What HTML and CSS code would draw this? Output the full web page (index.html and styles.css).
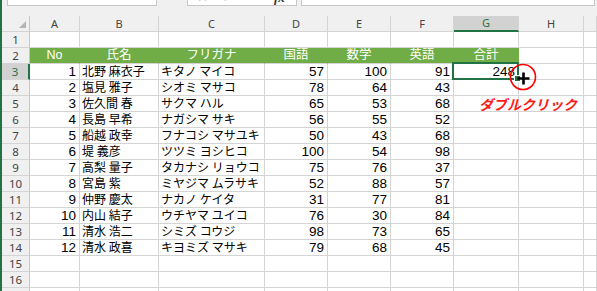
FILE: index.html
```html
<!DOCTYPE html>
<html lang="ja">
<head>
<meta charset="utf-8">
<link rel="stylesheet" href="styles.css">
</head>
<body>
<div class="app">
  <div class="topbar">
    <div class="namebox"></div>
    <div class="fxbtns"><span class="gx">✕</span><span class="gx">✓</span><span class="fx">fx</span></div>
    <div class="formula"></div>
  </div>
  <div class="sheet">
    <div class="row hdr">
      <div class="corner"></div><div>A</div><div>B</div><div>C</div><div>D</div><div>E</div><div>F</div><div class="sel">G</div><div>H</div><div></div>
    </div>
    <div class="row"><div class="rh">1</div><div></div><div></div><div></div><div></div><div></div><div></div><div></div><div></div><div></div></div>
    <div class="row"><div class="rh">2</div><div class="g">No</div><div class="g">氏名</div><div class="g">フリガナ</div><div class="g">国語</div><div class="g">数学</div><div class="g">英語</div><div class="g">合計</div><div></div><div></div></div>
    <div class="row"><div class="rh sel">3</div><div class="n">1</div><div class="t">北野 麻衣子</div><div class="t">キタノ マイコ</div><div class="n">57</div><div class="n">100</div><div class="n">91</div><div class="n active">248<span class="selbox"></span><span class="handle"></span><svg class="cursor" width="30" height="30" viewBox="0 0 30 30"><circle cx="15" cy="15" r="12.5" fill="none" stroke="#ff0000" stroke-width="1.6"/><path d="M15.5 10.5v12M9.5 16.5h12" stroke="#000" stroke-width="2.6"/></svg><span class="note">ダブルクリック</span></div><div></div><div></div></div>
    <div class="row"><div class="rh">4</div><div class="n">2</div><div class="t">塩見 雅子</div><div class="t">シオミ マサコ</div><div class="n">78</div><div class="n">64</div><div class="n">43</div><div></div><div></div><div></div></div>
    <div class="row"><div class="rh">5</div><div class="n">3</div><div class="t">佐久間 春</div><div class="t">サクマ ハル</div><div class="n">65</div><div class="n">53</div><div class="n">68</div><div></div><div></div><div></div></div>
    <div class="row"><div class="rh">6</div><div class="n">4</div><div class="t">長島 早希</div><div class="t">ナガシマ サキ</div><div class="n">56</div><div class="n">55</div><div class="n">52</div><div></div><div></div><div></div></div>
    <div class="row"><div class="rh">7</div><div class="n">5</div><div class="t">船越 政幸</div><div class="t">フナコシ マサユキ</div><div class="n">50</div><div class="n">43</div><div class="n">68</div><div></div><div></div><div></div></div>
    <div class="row"><div class="rh">8</div><div class="n">6</div><div class="t">堤 義彦</div><div class="t">ツツミ ヨシヒコ</div><div class="n">100</div><div class="n">54</div><div class="n">98</div><div></div><div></div><div></div></div>
    <div class="row"><div class="rh">9</div><div class="n">7</div><div class="t">高梨 量子</div><div class="t">タカナシ リョウコ</div><div class="n">75</div><div class="n">76</div><div class="n">37</div><div></div><div></div><div></div></div>
    <div class="row"><div class="rh">10</div><div class="n">8</div><div class="t">宮島 紫</div><div class="t">ミヤジマ ムラサキ</div><div class="n">52</div><div class="n">88</div><div class="n">57</div><div></div><div></div><div></div></div>
    <div class="row"><div class="rh">11</div><div class="n">9</div><div class="t">仲野 慶太</div><div class="t">ナカノ ケイタ</div><div class="n">31</div><div class="n">77</div><div class="n">81</div><div></div><div></div><div></div></div>
    <div class="row"><div class="rh">12</div><div class="n">10</div><div class="t">内山 結子</div><div class="t">ウチヤマ ユイコ</div><div class="n">76</div><div class="n">30</div><div class="n">84</div><div></div><div></div><div></div></div>
    <div class="row"><div class="rh">13</div><div class="n">11</div><div class="t">清水 浩二</div><div class="t">シミズ コウジ</div><div class="n">98</div><div class="n">73</div><div class="n">65</div><div></div><div></div><div></div></div>
    <div class="row"><div class="rh">14</div><div class="n">12</div><div class="t">清水 政喜</div><div class="t">キヨミズ マサキ</div><div class="n">79</div><div class="n">68</div><div class="n">45</div><div></div><div></div><div></div></div>
    <div class="row"><div class="rh">15</div><div></div><div></div><div></div><div></div><div></div><div></div><div></div><div></div><div></div></div>
    <div class="row"><div class="rh">16</div><div></div><div></div><div></div><div></div><div></div><div></div><div></div><div></div><div></div></div>
    <div class="row"><div class="rh">17</div><div></div><div></div><div></div><div></div><div></div><div></div><div></div><div></div><div></div></div>
  </div>
</div>
</body>
</html>
```

FILE: styles.css
```css
html, body {
  margin: 0;
  padding: 0;
  overflow: hidden;
  background: #ffffff;
  font-family: "Liberation Sans", "Noto Sans CJK JP", sans-serif;
}

.app {
  border-left: 2px solid #217346;
  height: 291px;
  box-sizing: border-box;
  overflow: hidden;
}

.topbar {
  height: 16px;
  background: #f0f0f0;
  display: flex;
  align-items: flex-start;
}

.namebox,
.fxbtns,
.formula {
  height: 6px;
  box-sizing: border-box;
  background: #ffffff;
  border: 1px solid #c6c6c6;
  border-top: none;
}

.namebox {
  margin-left: 5px;
  width: 150px;
}

.fxbtns {
  margin-left: 30px;
  width: 110px;
  display: flex;
  align-items: flex-end;
  overflow: hidden;
}

.fxbtns span {
  display: block;
  line-height: 14px;
  margin-top: -11px;
  height: 14px;
  font-size: 13px;
}

.gx {
  color: #c8c8c8;
  margin-left: 9px;
  width: 16px;
  font-family: "DejaVu Sans", sans-serif;
}

.fx {
  margin-left: 36px;
  font-family: "Liberation Serif", serif;
  font-style: italic;
  font-weight: bold;
  color: #333;
}

.formula {
  margin-left: 4px;
  width: 294px;
}

.sheet {
  position: relative;
}

.row {
  display: grid;
  grid-template-columns: 28px 50px 79px 106px 63px 63px 63px 65px 65px 1fr;
  height: 16px;
}

.row > div {
  box-sizing: border-box;
  border-right: 1px solid #d4d4d4;
  border-bottom: 1px solid #d4d4d4;
  padding: 0 3px;
  line-height: 15px;
  white-space: nowrap;
  font-size: 12px;
  color: #000;
}

.hdr > div {
  background: #f0f0f0;
  text-align: center;
  font-family: "Noto Sans", sans-serif;
  font-size: 11px;
  color: #444;
  border-bottom-color: #d4d4d4;
}

.hdr > div.sel {
  background: #d2d2d2;
  color: #217346;
  border-bottom: 2px solid #217346;
  line-height: 14px;
}

.corner {
  position: relative;
  border-right-color: #c6c6c6 !important;
}

.corner::after {
  content: "";
  position: absolute;
  right: 3px;
  bottom: 3px;
  width: 7px;
  height: 7px;
  background: #b4b4b4;
  clip-path: polygon(100% 0, 100% 100%, 0 100%);
}

.row > .rh {
  background: #f0f0f0;
  text-align: center;
  font-family: "Noto Sans", sans-serif;
  font-size: 11.5px;
  color: #444;
  padding: 0;
  border-right-color: #c6c6c6;
}

.row > .rh.sel {
  background: #d2d2d2;
  color: #217346;
  border-right: 2px solid #217346;
}

.row > .g {
  background: #70ad47;
  color: #ffffff;
  text-align: center;
  font-family: "Liberation Sans", "Noto Sans CJK JP", sans-serif;
  font-size: 12.5px;
  border-right-color: #70ad47;
}

.row > .n {
  text-align: right;
  font-family: "Liberation Sans", sans-serif;
  font-size: 13.5px;
  padding-right: 3px;
}

.row > .t {
  text-align: left;
  font-family: "Noto Sans CJK JP", sans-serif;
  font-size: 12px;
  padding-left: 2px;
  line-height: 14px;
}

.row > .active {
  position: relative;
}

.selbox {
  position: absolute;
  left: -2px;
  top: -2px;
  right: -1px;
  bottom: -1px;
  border: 2px solid #217346;
}

.handle {
  position: absolute;
  right: -3px;
  bottom: -3px;
  width: 5px;
  height: 5px;
  background: #217346;
  border: 1px solid #ffffff;
}

.cursor {
  position: absolute;
  left: 54px;
  top: -2px;
}

.note {
  position: absolute;
  left: 25px;
  top: 32px;
  font-family: "Noto Sans CJK JP", sans-serif;
  font-size: 14px;
  font-weight: bold;
  font-style: italic;
  color: #ff1a1a;
  line-height: 16px;
  white-space: nowrap;
  text-align: left;
}
```
